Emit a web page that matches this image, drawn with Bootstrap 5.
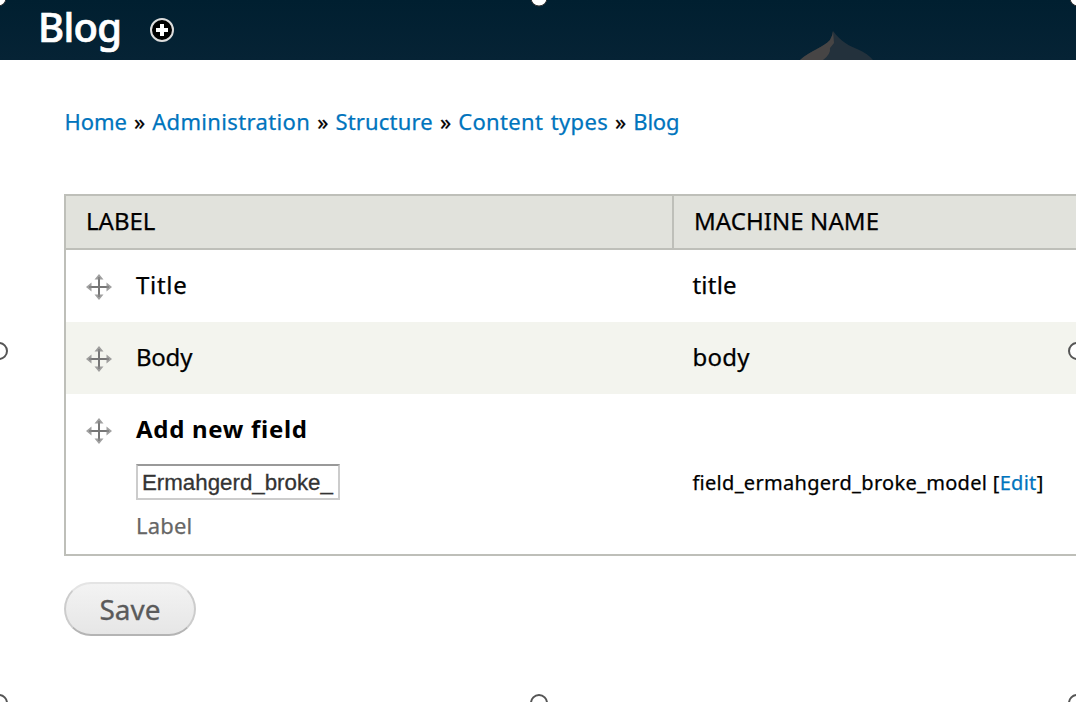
<!DOCTYPE html>
<html lang="en">
<head>
<meta charset="utf-8">
<meta name="viewport" content="width=device-width, initial-scale=1">
<title>Blog</title>
<link href="https://cdn.jsdelivr.net/npm/bootstrap@5.3.0/dist/css/bootstrap.min.css" rel="stylesheet">
<style>
body{font-family:"Noto Sans","Open Sans",sans-serif;color:#000;background:#fff;height:702px;overflow:hidden;font-size:24px;-webkit-text-stroke:.25px currentColor}
a{color:#0074bd;text-decoration:none}
.topbar{height:60px;background:linear-gradient(#001f30,#062335);padding-left:38px}
.topbar h1{font-size:40px;line-height:54px;font-weight:500;letter-spacing:-.7px;width:111px;-webkit-text-stroke-width:.7px}
.plus{margin-top:17px}
.dome{left:800px;bottom:0}
.crumbs{height:134px;padding:46px 0 0 64.5px;font-size:22px;line-height:30px;white-space:pre;word-spacing:1.3px}
.crumbs a{letter-spacing:.35px}
.crumbs a:nth-child(3){letter-spacing:.18px}
.crumbs a:first-child{letter-spacing:-.05px}
.crumbs a:last-child{letter-spacing:-.2px}
.fields{margin-left:64px;height:362px;border:2px solid #bebfb9;border-right:0}
.head-row{height:54px;background:#e1e2dc;border-bottom:2px solid #bebfb9;line-height:50px}
.first-col{width:609px;flex:none}
.head-row .first-col{width:608px;border-right:2px solid #bebfb9;padding-left:20px}
.head-row .second-col{padding-left:20px;letter-spacing:.07px}
.field-row{height:72px;line-height:70px}
.field-row.alt{background:#f3f4ee}
.field-row .first-col{padding-left:20px}
.field-row .second-col{padding-left:17.4px;letter-spacing:.25px}
.name-title{letter-spacing:.7px}
.name-body{letter-spacing:-.25px}
.grip{width:26px;height:26px;margin:24px 24px 0 0;flex:none}
.new-row{height:160px}
.label-input{width:204px;height:36px;padding:1px 0 0 4px;border:2px solid #ccc;border-top-color:#999;border-radius:0;font:22.3px/31px "Liberation Sans",Arial,sans-serif;color:#333;background:#fff;-webkit-text-stroke:.3px #333}
.new-title{font-size:24px;line-height:70px;height:70px;font-weight:700;letter-spacing:.7px;-webkit-text-stroke-width:0}
.hint{color:#666;font-size:22px;line-height:30px;margin-top:10px;letter-spacing:.2px}
.field-row .machine{font-size:20px;line-height:30px;padding-top:74px;white-space:nowrap;letter-spacing:.3px}
.save{margin:26px 0 0 64px;width:132px;height:54px;border-radius:27px;border:2px solid #e4e4e4;border-color:#e4e4e4 #ccc #b4b4b4;background:linear-gradient(#f3f3f3,#e6e6e6);color:#5a5a5a;font-size:28px;line-height:50px;padding:0;display:block;-webkit-text-stroke:.3px #5a5a5a}
.handles{inset:0;pointer-events:none}
</style>
</head>
<body class="position-relative">
<header class="topbar d-flex align-items-start position-relative">
  <h1 class="text-white m-0">Blog</h1>
  <svg class="plus" width="26" height="26" viewBox="0 0 26 26"><circle cx="13" cy="13" r="11" fill="#000" stroke="#ddd" stroke-width="2"/><path d="M13 7v12M7 13h12" stroke="#fff" stroke-width="4"/></svg>
  <svg class="dome position-absolute" width="76" height="30" viewBox="0 0 76 30"><path d="M0 30C10 21 24 17 30 10Q33 5 33 1C41 12 50 16 57 19Q67 23 73 30Z" fill="#23313c"/><path d="M0 30C10 21 24 17 30 10Q33 5 33 1L34 13L30 18Q31 24 23 30Z" fill="#474545"/></svg>
</header>
<nav class="crumbs"><a href="#">Home</a> » <a href="#">Administration</a> » <a href="#">Structure</a> » <a href="#">Content types</a> » <a href="#">Blog</a></nav>
<svg width="0" height="0" class="position-absolute"><defs><g id="move"><path d="M13 3v20M3 13h20" stroke="#777" stroke-width="2"/><path d="M13 0l4.5 5.5h-9zM13 26l4.5-5.5h-9zM0 13l5.5-4.5v9zM26 13l-5.5-4.5v9z" fill="#888" fill-opacity=".8"/></g></defs></svg>
<main class="fields">
  <div class="head-row d-flex"><div class="first-col">LABEL</div><div class="second-col">MACHINE NAME</div></div>
  <div class="field-row d-flex"><div class="first-col d-flex"><svg class="grip" viewBox="0 0 26 26"><use href="#move"/></svg><span class="name-title">Title</span></div><div class="second-col">title</div></div>
  <div class="field-row alt d-flex"><div class="first-col d-flex"><svg class="grip" viewBox="0 0 26 26"><use href="#move"/></svg><span class="name-body">Body</span></div><div class="second-col">body</div></div>
  <div class="field-row new-row d-flex">
    <div class="first-col d-flex"><svg class="grip" viewBox="0 0 26 26"><use href="#move"/></svg>
      <div><div class="new-title">Add new field</div><input class="label-input d-block" type="text" value="Ermahgerd_broke_" aria-label="Label"><div class="hint">Label</div></div>
    </div>
    <div class="second-col machine">field_ermahgerd_broke_model [<a href="#">Edit</a>]</div>
  </div>
</main>
<button class="btn save" type="button">Save</button>
<svg class="handles position-absolute w-100 h-100" fill="#fff" stroke="#555" stroke-width="2"><g stroke="#333" stroke-width="1"><circle cx="-2" cy="-2" r="8"/><circle cx="539" cy="-2" r="8"/><circle cx="1078" cy="-2" r="8"/></g><circle cx="-1" cy="351" r="8"/><circle cx="1077" cy="351" r="8"/><circle cx="-1" cy="703" r="8"/><circle cx="539" cy="703" r="8"/><circle cx="1077" cy="703" r="8"/></svg>
<script src="https://cdn.jsdelivr.net/npm/bootstrap@5.3.0/dist/js/bootstrap.bundle.min.js"></script>
</body>
</html>
